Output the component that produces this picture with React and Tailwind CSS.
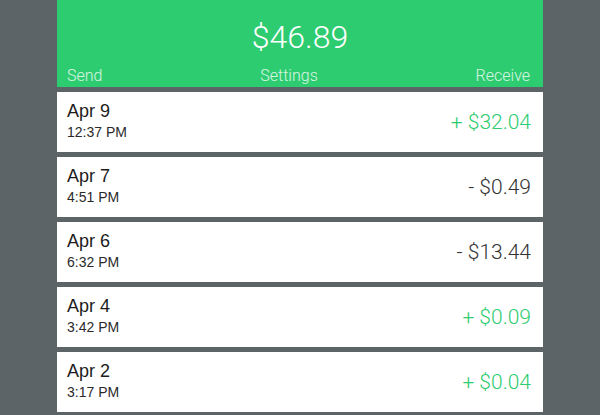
import React from 'react';

const transactions = [
  { date: 'Apr 9', time: '12:37 PM', amount: '+ $32.04', credit: true },
  { date: 'Apr 7', time: '4:51 PM', amount: '- $0.49', credit: false },
  { date: 'Apr 6', time: '6:32 PM', amount: '- $13.44', credit: false },
  { date: 'Apr 4', time: '3:42 PM', amount: '+ $0.09', credit: true },
  { date: 'Apr 2', time: '3:17 PM', amount: '+ $0.04', credit: true },
];

const Row = ({ tx }) => (
  <div className="flex h-[60px] items-center justify-between bg-white pl-[10px] pr-[12px]">
    <div className="flex flex-col">
      <span className="text-[18px] leading-[20px] text-[#1c1c1c]">{tx.date}</span>
      <span className="text-[14px] leading-[22px] text-[#2a2a2a]">{tx.time}</span>
    </div>
    <span
      className={`text-[21px] leading-none font-light ${
        tx.credit ? 'text-[#2ecc71]' : 'text-[#333333]'
      }`}
      style={{ fontFamily: 'Roboto, "Liberation Sans", sans-serif' }}
    >
      {tx.amount}
    </span>
  </div>
);

export default function App() {
  return (
    <div className="flex h-[415px] w-[600px] justify-center overflow-hidden bg-[#5d6467] font-['Liberation_Sans',Arial,sans-serif]">
      <div className="flex w-[486px] flex-col">
        <div className="flex h-[87px] flex-col bg-[#2ecc71] font-['Roboto','Liberation_Sans',sans-serif] font-light text-white">
          <div className="pt-[21px] text-center text-[32px] leading-[32px]">$46.89</div>
          <div className="mt-auto flex items-center justify-between px-[10px] pb-[3px] text-[16px] leading-[16px] text-white/80">
            <span>Send</span>
            <span>Settings</span>
            <span className="pr-[3px]">Receive</span>
          </div>
        </div>
        <div className="mt-[5px] flex flex-col gap-[5px]">
          {transactions.map((tx) => (
            <Row key={tx.date} tx={tx} />
          ))}
        </div>
      </div>
    </div>
  );
}
